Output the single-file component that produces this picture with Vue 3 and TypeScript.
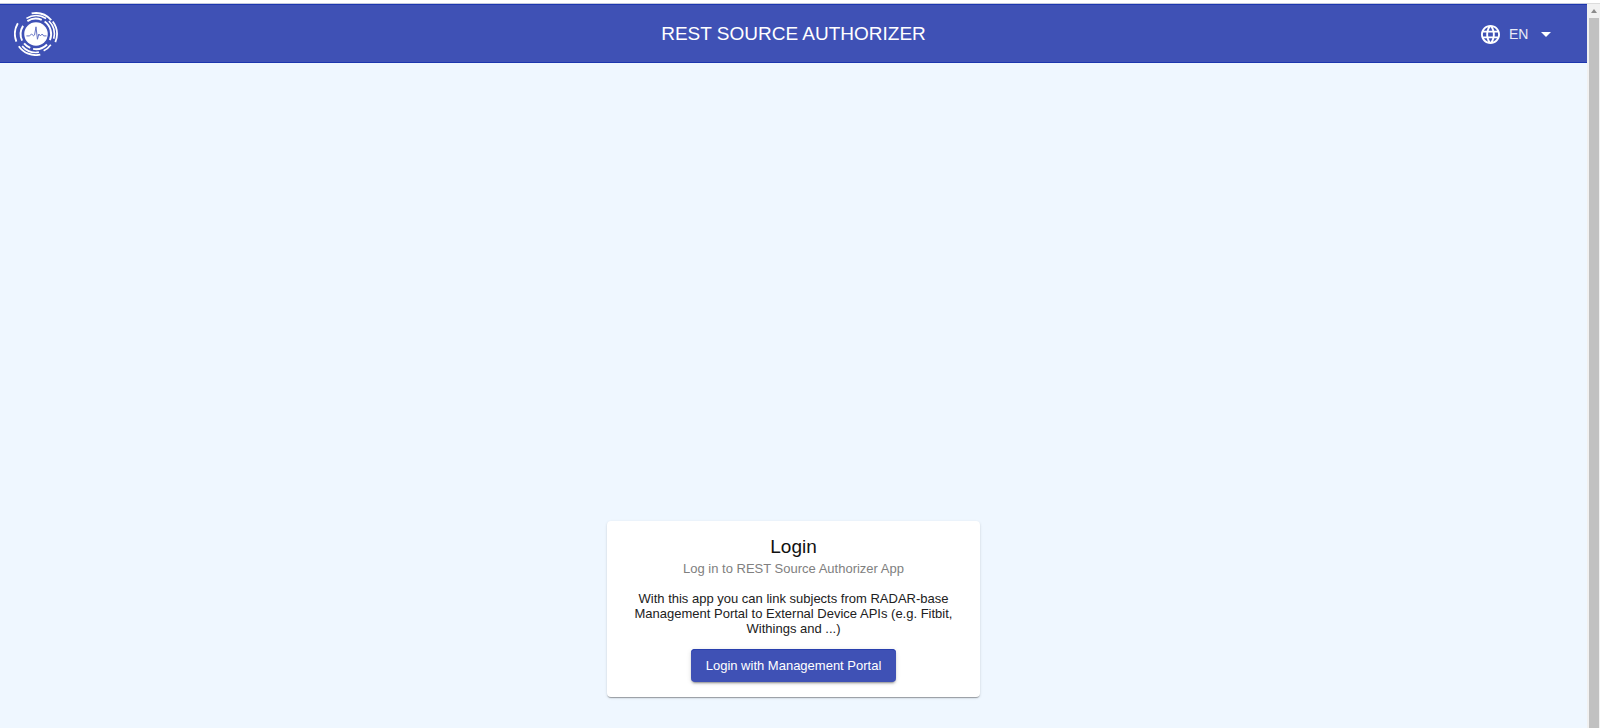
<script setup lang="ts">
import { ref } from 'vue'

const languages: string[] = ['EN', 'NL', 'DE']
const language = ref<string>('EN')
</script>

<template>
  <div class="window">
    <div class="page">
      <header class="toolbar">
        <a class="logo" href="#" aria-label="Home">
          <svg viewBox="0 0 46 46" width="44" height="44" fill="none" stroke="#fff">
            <circle cx="23" cy="23" r="12.300" fill="#fff" stroke="none" />
            <path d="M13 25h3l2.500-2 2 2 1-1 1.500-8.500 1.500 13 1.500-5.500 1.500 2 2-2 1.500 2h3" stroke="#5c6bc0" stroke-width="1" />
            <g stroke-width="1.900">
              <path d="M18.400 1.500A22 22 0 0 1 39 8.500" />
              <path d="M40.500 10A22 22 0 0 1 43.200 31.500" />
              <path d="M27.500 44.600A22 22 0 0 1 5 35.700" />
              <path d="M2.500 31A22 22 0 0 1 4 11.800" />
            </g>
            <g stroke-width="1.700">
              <path d="M13 6.700A19.200 19.200 0 0 1 33.500 6.800" />
              <path d="M36.500 9.400A19.200 19.200 0 0 1 41.500 28" />
              <path d="M26 42A19.200 19.200 0 0 1 8.500 35.700" />
              <path d="M38.500 34.200A19.200 19.200 0 0 1 31 40.500" />
            </g>
            <g stroke-width="2">
              <path d="M14 9.500A16 16 0 0 1 29 8.200" />
              <path d="M32 10A16 16 0 0 1 37.500 29.500" />
              <path d="M34.500 34A16 16 0 0 1 20 38.600" />
              <path d="M17 37.500A16 16 0 0 1 10.500 32.900" />
              <path d="M8.500 30A16 16 0 0 1 9.500 14.500" />
            </g>
          </svg>
        </a>
        <h1 class="title">REST SOURCE AUTHORIZER</h1>
        <label class="language">
          <svg class="globe" viewBox="2 2 20 20" width="19" height="19" fill="#fff">
            <path d="M11.990 2C6.470 2 2 6.480 2 12s4.470 10 9.990 10C17.520 22 22 17.520 22 12S17.520 2 11.990 2zm6.930 6h-2.950c-.32-1.250-.78-2.450-1.380-3.560 1.840.63 3.370 1.910 4.330 3.560zM12 4.040c.83 1.200 1.480 2.530 1.910 3.960h-3.820c.43-1.430 1.080-2.760 1.910-3.960zM4.260 14C4.100 13.360 4 12.690 4 12s.1-1.360.26-2h3.380c-.08.66-.14 1.320-.14 2s.06 1.340.14 2H4.260zm.82 2h2.950c.32 1.250.78 2.450 1.380 3.560-1.840-.63-3.370-1.900-4.330-3.560zm2.950-8H5.080c.96-1.660 2.490-2.930 4.330-3.560C8.810 5.550 8.350 6.750 8.030 8zM12 19.960c-.83-1.200-1.480-2.530-1.910-3.960h3.820c-.43 1.430-1.080 2.760-1.910 3.960zM14.340 14H9.660c-.09-.66-.16-1.320-.16-2s.07-1.350.16-2h4.680c.09.65.16 1.320.16 2s-.07 1.340-.16 2zm.25 5.560c.6-1.110 1.060-2.310 1.380-3.560h2.950c-.96 1.650-2.490 2.930-4.330 3.560zM16.360 14c.08-.66.14-1.320.14-2s-.06-1.340-.14-2h3.380c.16.64.26 1.310.26 2s-.1 1.360-.26 2h-3.380z" />
          </svg>
          <select v-model="language" class="select" aria-label="Language">
            <option v-for="item in languages" :key="item" :value="item">{{ item }}</option>
          </select>
          <svg class="caret" viewBox="0 0 10 5" width="10" height="5" fill="#fff">
            <path d="M0 0h10L5 5z" />
          </svg>
        </label>
      </header>
      <main class="content">
        <section class="card">
          <h2 class="heading">Login</h2>
          <p class="subtitle">Log in to REST Source Authorizer App</p>
          <p class="text">
            With this app you can link subjects from RADAR-base Management Portal to External Device
            APIs (e.g. Fitbit, Withings and ...)
          </p>
          <button class="button" type="button">Login with Management Portal</button>
        </section>
      </main>
    </div>
    <div class="scrollbar" aria-hidden="true">
      <svg class="arrow" viewBox="0 0 6 4" width="6" height="4" fill="#8b8b8b">
        <path d="M3 0l3 4H0z" />
      </svg>
      <div class="thumb"></div>
    </div>
  </div>
</template>

<style>
body {
  background: #fff;
}
</style>

<style scoped>
.window {
  display: flex;
  box-sizing: border-box;
  min-height: 100vh;
  padding-top: 3px;
  font-family: "Liberation Sans", Arial, sans-serif;
}

.page {
  display: flex;
  flex: 1;
  flex-direction: column;
  background: #eff7ff;
}

.toolbar {
  display: grid;
  grid-template-columns: 1fr auto 1fr;
  align-items: center;
  box-sizing: border-box;
  height: 60px;
  padding: 0 36px 0 14px;
  border-top: 1px solid #c4c8dc;
  background: #3f51b5;
  color: #fff;
  box-shadow: inset 0 1px #1c36ae, inset 0 -1px #1c36ae;
}

.logo {
  display: block;
  width: 44px;
  height: 44px;
}

.title {
  margin: 0 0 0 22px;
  font-size: 19px;
  font-weight: 400;
  line-height: 24px;
}

.language {
  display: flex;
  align-items: center;
  justify-self: end;
  padding-top: 1px;
}

.globe {
  margin-right: 9px;
}

.select {
  width: 32px;
  padding: 0;
  border: 0;
  appearance: none;
  background: transparent;
  color: #e8eaf6;
  font-family: inherit;
  font-size: 14px;
  line-height: 18px;
}

.select option {
  color: #222;
}

.content {
  display: flex;
  flex: 1;
  flex-direction: column;
  align-items: center;
  justify-content: flex-end;
  padding: 31px 16px;
}

.card {
  display: flex;
  flex-direction: column;
  align-items: center;
  box-sizing: border-box;
  width: 100%;
  max-width: 373px;
  padding: 15px 16px;
  border-radius: 4px;
  background: #fff;
  box-shadow: 0 2px 1px -1px rgba(0, 0, 0, 0.2), 0 1px 1px rgba(0, 0, 0, 0.14), 0 1px 3px rgba(0, 0, 0, 0.12);
  color: #212121;
  text-align: center;
}

.heading {
  margin: 0;
  color: #111;
  font-size: 19px;
  font-weight: 400;
  line-height: 22px;
}

.subtitle {
  margin: 3px 0 14px;
  color: #808080;
  font-size: 13px;
  line-height: 16px;
}

.text {
  margin: 0 0 13px;
  font-size: 13px;
  line-height: 15px;
}

.button {
  height: 33px;
  padding: 0 15px;
  border: 0;
  border-radius: 4px;
  background: #3f51b5;
  color: #fff;
  box-shadow: inset 0 1px #283fae, 0 3px 1px -2px rgba(0, 0, 0, 0.2), 0 2px 2px rgba(0, 0, 0, 0.14), 0 1px 5px rgba(0, 0, 0, 0.12);
  font-family: inherit;
  font-size: 13px;
  cursor: pointer;
}

.scrollbar {
  display: flex;
  flex-direction: column;
  align-items: center;
  box-sizing: border-box;
  width: 13px;
  border-top: 1px solid #dcdcdc;
  background: #f1f1f1;
}

.arrow {
  margin: 5px 0;
}

.thumb {
  flex: 1;
  width: 10px;
  background: #c1c1c1;
}
</style>
